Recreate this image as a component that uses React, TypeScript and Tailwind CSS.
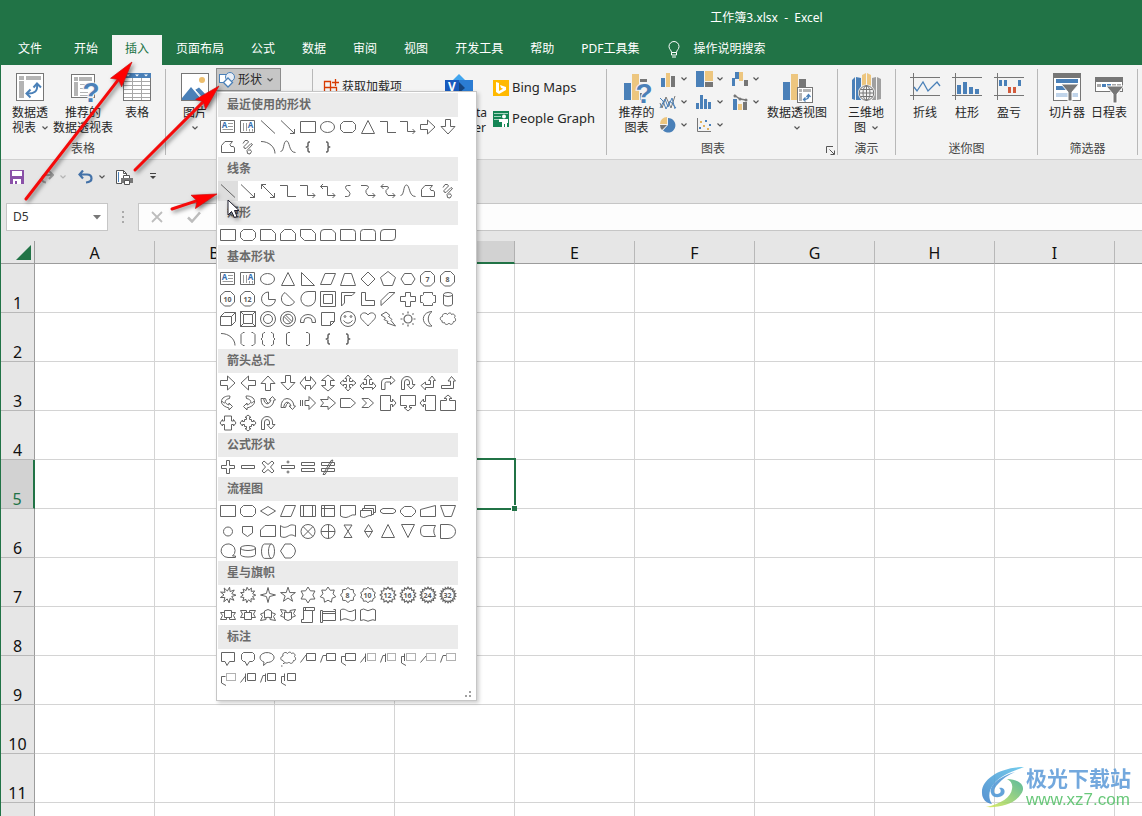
import React from "react";

/* ---------- shape gallery data ---------- */

type Opt = { t?: string; tf?: string; w?: number };
type Shape = [string, string, Opt?];

const circ = (cx: number, cy: number, r: number) =>
  `M${cx - r} ${cy}A${r} ${r} 0 1 1 ${cx + r} ${cy}A${r} ${r} 0 1 1 ${cx - r} ${cy}Z`;

const star = (n: number, R: number, r: number, turn = 0) => {
  const pts: string[] = [];
  for (let i = 0; i < n * 2; i++) {
    const a = (Math.PI * i) / n - Math.PI / 2 + turn;
    const q = i % 2 ? r : R;
    pts.push(`${(10 + q * Math.cos(a)).toFixed(2)} ${(10 + q * Math.sin(a)).toFixed(2)}`);
  }
  return `M${pts.join("L")}Z`;
};

const rot = (deg: number) => `rotate(${deg} 10 10)`;
const flipX = "translate(20 0) scale(-1 1)";
const flipY = "translate(0 20) scale(1 -1)";

const RECT = "M2.5 4.5H17.5V15.5H2.5Z";
const ROUND = "M5.5 4.5H14.5L17.5 7.5V12.5L14.5 15.5H5.5L2.5 12.5V7.5Z";
const ELLIPSE = "M2.5 10A7 5.500 0 1 1 16.5 10A7 5.500 0 1 1 2.5 10Z";
const ARROW = "M2.5 7.5H9.5V3L17 10L9.5 17V12.5H2.5Z";
const TRI = "M10 3.5L16.5 16.5H3.5Z";
const OCT = "M7 2.500H12.500L16.500 6.500V13L12.500 17H6.500L2.500 13V6.500Z";
const ELBOW = "M2 4.5H9.5V15.5H18";
const ELBOW_ARROW = "M2 4.5H9.5V14.5H17M14.5 12L17 14.5L14.5 17";
const FREE = "M3.5 15.5V8.5L7 4.5H14.5L12 7.5L13 9.5H15.5L16.5 11V15.5Z";
const SCRIB = "M5 6.500L7 3.500H9.500L10.500 5L6 9.500V11L8 11.500L13 6.500L14.500 7.500L9 13.500L9.500 16.500L12 17L13.500 14.500L12 12.500L10.500 14";
const SCURVE = "M2.5 14.5C6.5 14.5 5 4 8.5 4C12 4 10.5 15.5 17.5 15.5";
const ARC = "M3 4.5C11 4.5 17 10 17 16.5";
const BRACE = "M12 5H11L10 6V9L8.5 10L10 11V14L11 15H12";
const HEX = "M6.5 4.5H13.5L17 10L13.5 15.5H6.5L3 10Z";
const LINE: Shape = ["直线", "M3 3.5L17 16.5"];
const LARROW: Shape = ["箭头", "M3 3.5L16.5 16.5M16.5 12V16.5H12"];
const UTURN = "M3.5 16.5V9A5.5 5.5 0 0 1 14.5 9V11.5H17L13 16L9 11.5H11.5V9A2.5 2.5 0 0 0 6.5 9V16.5Z";
const CURVED = "M5 5C8 2.5 12 3 12 3L11.5 5.5C6 6.5 6 10.5 11 12V10L14.5 13.5L11 17V15C3 13 2 8 5 5ZM4 8C4.500 9 6 10 7 10";
const CALLOUT_ARROW = "M2.5 2.5H12.500V8.500H14.500V6L18 10L14.500 14V11.500H12.500V17.5H2.5Z";

const groups: { title: string; shapes: Shape[] }[] = [
  {
    title: "最近使用的形状",
    shapes: [
      ["文本框", "TB"], ["竖排文本框", "TBV"], LINE, LARROW, ["矩形", RECT],
      ["椭圆", ELLIPSE], ["圆角矩形", ROUND],
      ["等腰三角形", TRI], ["肘形连接符", ELBOW], ["肘形箭头连接符", ELBOW_ARROW],
      ["箭头: 右", ARROW], ["箭头: 下", ARROW, { tf: rot(90) }], ["任意多边形", FREE],
      ["自由曲线", SCRIB], ["弧形", ARC], ["曲线", SCURVE],
      ["左大括号", BRACE, { w: 1.5 }], ["右大括号", BRACE, { w: 1.5, tf: flipX }],
    ],
  },
  {
    title: "线条",
    shapes: [
      LINE, LARROW, ["双箭头", "M3.5 3.5L16.5 16.5M16.5 12V16.5H12M8 3.5H3.5V8"],
      ["肘形", ELBOW], ["肘形箭头", ELBOW_ARROW],
      ["肘形双箭头", "M2.500 5.5H9.5V14.5H17M5 3L2.500 5.500L5 8M14.5 12L17 14.5L14.5 17"],
      ["曲线连接符", "M12.5 4.500H9.500Q7.500 4.500 7.500 6.500L8.500 8.500L11 10.500L12 12.500Q12 15.5 9.500 15.5H7"],
      ["曲线箭头", "M3 4.500H8Q10.500 4.500 10.500 6.500L8 9.500V11.500L10 14.500H17M14.5 12L17 14.5L14.5 17"],
      ["曲线双箭头", "M3 5.500H9Q10.500 5.500 10.500 7L8 9.500V11.500L10 14.500H17M14.5 12L17 14.5L14.5 17M5.500 3L3 5.500L5.500 8"],
      ["曲线", SCURVE], ["任意多边形", FREE], ["自由曲线", SCRIB],
    ],
  },
  {
    title: "矩形",
    shapes: [
      ["矩形", RECT], ["圆角", ROUND], ["剪去单角", "M2.5 4.5H13.5L17.5 8.5V15.5H2.5Z"],
      ["剪去顶角", "M6.5 4.5H13.5L17.5 8.5V15.5H2.5V8.5Z"],
      ["剪去对角", "M2.5 4.5H13.5L17.5 8.5V15.5H6.5L2.5 11.5Z"],
      ["一个圆顶角剪去另一个", "M6 4.5H14L17.5 8V15.5H2.5V8Q2.5 4.5 6 4.5Z"],
      ["单圆角", "M2.5 4.5H14.5Q17.5 4.5 17.5 7.500V15.5H2.5Z"],
      ["圆顶角", "M5.500 4.5H14.5Q17.5 4.5 17.5 7.500V15.5H2.5V7.500Q2.5 4.5 5.500 4.500Z"],
      ["对角圆角", "M6 4.5H17.5V12Q17.5 15.5 14 15.5H2.5V8Q2.5 4.5 6 4.5Z"],
    ],
  },
  {
    title: "基本形状",
    shapes: [
      ["文本框", "TB"], ["竖排文本框", "TBV"], ["椭圆", ELLIPSE],
      ["三角形", TRI], ["直角三角形", "M3.5 3.5V16.5H16.5Z"], ["平行四边形", "M7 4.5H17.5L13 15.5H2.5Z"],
      ["梯形", "M6.5 4.500H13.5L17.500 16.5H2.500Z"], ["菱形", "M10 3L17 10L10 17L3 10Z"],
      ["五边形", "M10 2.500L17.5 8.5L14.5 16.5H5.5L2.5 8.5Z"], ["六边形", HEX],
      ["七边形", OCT, { t: "7" }], ["八边形", OCT, { t: "8" }],
      ["十边形", OCT, { t: "10" }], ["十二边形", OCT, { t: "12" }],
      ["不完整圆", "M10.500 3A7 7 0 1 0 17.500 10.500H10.500Z"],
      ["弦形", "M7 3.500A7 7 0 1 0 16.5 13Z"], ["泪滴形", "M10 2.500H17.5V10A7.300 7.300 0 1 1 10 2.500Z"],
      ["图文框", "M2.5 2.5H17.5V17.5H2.5ZM5.5 5.5H14.5V14.5H5.5Z"],
      ["半闭框", "M3.5 3.5H17L14 6.5H6.5V14L3.5 17Z"], ["L 形", "M3.5 3.5H7.5V11.5H16.5V16.5H3.5Z"],
      ["斜纹", "M3 11.500L11 3.5H17L3 16.500Z"],
      ["十字形", "M7.500 3.5H12.500V7.5H17.5V12.5H12.500V17.5H7.500V12.5H2.5V7.5H7.500Z"],
      ["缺角矩形", "M5.5 3.5H14.5V5.500L15.500 6.500H17.5V13.5H15.500L14.500 14.500V16.5H5.5V14.500L4.500 13.500H2.5V6.5H4.500L5.5 5.500Z"],
      ["圆柱形", "M5.5 5.5A4.5 2 0 0 1 14.5 5.5V15A4.5 2 0 0 1 5.5 15ZM5.5 5.5A4.5 2 0 0 0 14.5 5.5"],
      ["立方体", "M2.5 7.5L6.5 3.5H17.5V12.5L13.5 16.5H2.5ZM2.5 7.5H13.5V16.5M13.5 7.5L17.5 3.5"],
      ["棱台", "M2.5 2.5H17.5V17.5H2.5ZM5.5 5.5H14.5V14.5H5.5ZM2.5 2.5L5.5 5.5M17.5 2.5L14.5 5.5M2.5 17.5L5.5 14.5M17.5 17.5L14.5 14.5"],
      ["圆环", circ(10, 10, 7.5) + circ(10, 10, 4.5)],
      ["禁止符", circ(10, 10, 7.5) + circ(10, 10, 4.8) + "M6 7.500L12.500 14M7.500 6L14 12.500"],
      ["空心弧", "M2.5 13.5V12A7.500 6.500 0 0 1 17.5 12V13.5H14V12A4 3.500 0 0 0 6 12V13.500Z"],
      ["折角形", "M3.5 3.5H16.5V12.5L12.5 16.5H3.5ZM12.5 16.5V12.5H16.5"],
      ["笑脸", circ(10, 10, 7.5) + circ(7, 7.5, 0.9) + circ(13, 7.5, 0.9) + "M5.500 11.5Q10 17 14.500 11.5"],
      ["心形", "M10 6C8 2.500 2.500 3.500 2.500 7.500C2.500 10.500 7 13 10 17C13 13 17.500 10.500 17.500 7.500C17.500 3.500 12 2.500 10 6Z"],
      ["闪电形", "M8 3L3 6L7.500 9L6 10.500L10 12.500L9 14L17.500 17L13 11.500L14 10.500L10.500 7.500L12 6.500Z"],
      ["太阳形", circ(10, 10, 4) + "M10 2.500V4.500M10 15.500V17.500M2.500 10H4.500M15.500 10H17.500M4.500 4.500L5.500 5.500M14.500 14.500L15.500 15.500M4.500 15.500L5.500 14.500M14.500 5.500L15.500 4.500", { w: 1.2 }],
      ["新月形", "M14 2.500C5 3 3 11 8 15.500C9.500 17 12 17.500 14 17C9 13.500 9 6.500 14 2.500Z"],
      ["云形", "M4.500 12C1.500 11.500 1.500 7.500 4.500 7.500C4 4.500 8 3.500 9.500 5.500C11 3 13.500 4 13.500 5.500C16 4 18 7 16.500 8.500C18.500 10 17.500 13.500 15.500 12.500C15 16 12 16 11 14C9.500 16.500 6.500 15.500 6.500 13.500C4 14.500 3.500 12.500 4.500 12Z"],
      ["弧形", ARC],
      ["双括号", "M6.5 3.5H5L3 5.500V14.500L5 16.5H6.5M13.5 3.5H15L17 5.500V14.500L15 16.5H13.5"],
      ["双大括号", "M7 3.5H6L4.500 5V8.500L3 10L4.500 11.500V15L6 16.5H7M13 3.5H14L15.500 5V8.500L17 10L15.500 11.500V15L14 16.5H13"],
      ["左中括号", "M12 3.5H10L8.5 5V15L10 16.5H12"], ["右中括号", "M8 3.5H10L11.5 5V15L10 16.5H8"],
      ["左大括号", BRACE, { w: 1.5 }], ["右大括号", BRACE, { w: 1.5, tf: flipX }],
    ],
  },
  {
    title: "箭头总汇",
    shapes: [
      ["右", ARROW], ["左", ARROW, { tf: rot(180) }], ["上", ARROW, { tf: rot(-90) }], ["下", ARROW, { tf: rot(90) }],
      ["左右", "M2 10L7.500 3.500V7.5H12.500V3.500L18 10L12.500 16.500V12.5H7.500V16.500Z"],
      ["上下", "M2 10L7.500 3.500V7.5H12.500V3.500L18 10L12.500 16.500V12.5H7.500V16.500Z", { tf: rot(90) }],
      ["十字箭头", "M10 2L13 5.500H11.500V8.500H14.500V7L18 10L14.500 13V11.500H11.500V14.500H13L10 18L7 14.500H8.500V11.500H5.500V13L2 10L5.500 7V8.500H8.500V5.500H7Z"],
      ["丁字箭头", "M10 2L14 6.500H11.500V11.500H14.500V9L18 13L14.500 16.500V14.500H5.500V16.500L2 13L5.500 9V11.500H8.500V6.500H6Z"],
      ["圆角右箭头", "M3.5 16.5V10Q3.5 5.500 8 5.500H12.500V3L17 7.500L12.500 11.500V9H8.500Q7 9 7 10.500V16.5Z"],
      ["手杖形", UTURN],
      ["直角双向", "M14 3L17.500 7.500H15.5V14.5H7.5V17L3 12.500L7.500 9V11.500H12.5V7.500H10.500Z"],
      ["直角上", "M13.500 3.500L17.500 8H15.5V15.5H3.5V12.500H12.500V8H10Z"],
      ["左弧形", CURVED], ["右弧形", CURVED, { tf: flipX }],
      ["下弧形", "M3 5.500H5.500Q6 10 9 11Q12.500 10 13 7H11L14.500 3.500L17.500 7H16Q15 14 9 14.500Q3 14 3 5.500ZM5.500 5.500H7.500Q8 9 10.500 10.500"],
      ["上弧形", "M3 5.500H5.500Q6 10 9 11Q12.500 10 13 7H11L14.500 3.500L17.500 7H16Q15 14 9 14.500Q3 14 3 5.500ZM5.500 5.500H7.500Q8 9 10.500 10.500", { tf: flipY }],
      ["虚尾", "M2.5 7V13M4.500 7V13M7 7.5H11V3.500L17.500 10L11 16.500V12.5H7Z"],
      ["燕尾形箭头", "M2.5 6.500H10V3.500L17.5 10L10 16.500V13.500H2.5L5.5 10Z"],
      ["五边形箭头", "M2.5 5.5H12.5L17.5 10L12.5 14.500H2.5Z"],
      ["V 形", "M4 5.5H10.5L15.5 10L10.500 14.500H4L8.500 10Z"],
      ["右标注", CALLOUT_ARROW],
      ["下标注", CALLOUT_ARROW, { tf: rot(90) }],
      ["左标注", CALLOUT_ARROW, { tf: rot(180) }],
      ["上标注", CALLOUT_ARROW, { tf: rot(-90) }],
      ["左右标注", "M6.500 3H13.500V8H15.500V6.500L18 10L15.500 13V11.500H13.500V17H6.500V11.500H4.500V13L2 10L4.500 6.500V8H6.500Z"],
      ["十字标注", "M10 2L13 4.500H11.500V6.500H13.500V8.500H15.500V7L18 10L15.500 13V11.500H13.500V13.500H11.500V15.500H13L10 18L7 15.500H8.500V13.500H6.500V11.500H4.500V13L2 10L4.500 7V8.500H6.500V6.500H8.500V4.500H7Z"],
      ["环形箭头", UTURN],
    ],
  },
  {
    title: "公式形状",
    shapes: [
      ["加号", "M8.5 3.5H11.5V8.5H16.5V11.5H11.5V16.5H8.5V11.5H3.5V8.5H8.5Z"],
      ["减号", "M3.5 8.5H16.5V11.5H3.5Z"],
      ["乘号", "M4 6L6 4L10 7.500L14 4L16 6L12.500 10L16 14L14 16L10 12.500L6 16L4 14L7.500 10Z"],
      ["除号", "M3.5 8.5H16.5V11.5H3.5Z" + circ(10, 5, 1) + circ(10, 15, 1)],
      ["等号", "M3.5 5.5H16.5V8.5H3.5ZM3.5 11.5H16.5V14.5H3.5Z"],
      ["不等号", "M3.5 5.5H16.5V8.5H3.5ZM3.5 11.5H16.5V14.5H3.5ZM5 17.500L13 3.500L15 3L7 17.500Z"],
    ],
  },
  {
    title: "流程图",
    shapes: [
      ["过程", RECT], ["可选过程", ROUND], ["决策", "M10 5.5L17.5 10L10 14.5L2.5 10Z"], ["数据", "M7 4.5H17.5L13 15.5H2.5Z"],
      ["预定义过程", RECT + "M5.500 4.500V15.500M14.500 4.500V15.500"],
      ["内部贮存", "M3.500 4.5H16.5V15.5H3.5ZM6.5 4.5V15.5M3.500 7.5H16.5"],
      ["文档", "M2.5 4.5H17.5V14C13 13 12 16 8 16.500Q5 16.500 2.500 15Z"],
      ["多文档", "M2.5 9.5H13.5V14.500C10 14 8 16.500 5.500 16.500L2.500 15.500ZM4.500 9.500V7.5H15.5V13.500H13.500M6.500 7.500V4.500H17.5V11.500H15.500"],
      ["终止", "M5 7.5H15L17.500 9V11L15 12.5H5L2.500 11V9Z"],
      ["准备", "M6.500 5.500H13.500L17.500 9V11.500L13.500 15.500H6.500L2.500 11.500V9Z"],
      ["手动输入", "M2.5 8.5L17.5 4.5V15.5H2.5Z"], ["手动操作", "M2.5 4.5H17.5L13.5 15.5H6.5Z"],
      ["接点", circ(10, 10.5, 4.5)], ["离页连接符", "M4.5 5.5H14.5V12L9.500 15.500L4.5 12Z"],
      ["卡片", "M2.5 9L7 4.5H17.5V15.5H2.5Z"],
      ["资料带", "M2.5 4.500C6 7.500 8 6 10 5.500C13 3 15 4 17.5 4.5V15.5C14 13 12 14 10 15C7 17 5 16.500 2.5 15.500Z"],
      ["汇总连接", circ(10, 10.5, 7) + "M5 5.500L15 15.500M15 5.500L5 15.500"], ["或者", circ(10, 10.5, 7) + "M3 10.500H17M10.500 3.500V17.500"],
      ["对照", "M6 4H14L6 16.500H14Z"], ["排序", "M10.500 3.500L14.500 10L10.500 16.500L6.500 10ZM6.500 10.500H14.500"],
      ["摘录", TRI], ["合并", TRI, { tf: flipY }],
      ["库存数据", "M6 4.5H17.5Q14 10 17.5 15.500H6Q2.500 15 2.500 10Q2.500 5 6 4.500Z"],
      ["延期", "M2.5 3.500H10A7 6.500 0 0 1 10 17.500H2.500Z"],
      ["顺序访问", "M10 16.500A7 6.800 0 1 1 14.500 15H17.5V16.500Z"],
      ["磁盘", "M2.500 7A7.500 2.500 0 0 1 17.500 7V13.500A7.500 2.500 0 0 1 2.500 13.500ZM2.500 7A7.500 2.500 0 0 0 17.500 7"],
      ["直接访问", "M6.500 3A3 7.200 0 0 0 6.500 17.400H13.500A3 7.200 0 0 0 13.500 3ZM13.500 3A3 7.200 0 0 0 13.500 17.400"],
      ["显示", "M7 3H13Q17.500 6 17.500 10Q17.500 14 13 17H7L2.500 10Z"],
    ],
  },
  {
    title: "星与旗帜",
    shapes: [
      ["爆炸形 1", star(9, 8, 4, 0.2)], ["爆炸形 2", star(11, 7.8, 4.8, 0.45)],
      ["四角星", star(4, 7.5, 2.2)], ["五角星", star(5, 7.8, 3)], ["六角星", star(6, 8, 4.8)], ["七角星", star(7, 8, 5.2)],
      ["八角星", star(8, 7.5, 6), { t: "8" }], ["十角星", star(10, 7.7, 6.3), { t: "10" }],
      ["十二角星", star(12, 7.9, 6), { t: "12", w: 1.1 }], ["十六角星", star(14, 7.9, 6), { t: "16", w: 1.1 }],
      ["二十四角星", star(16, 7.9, 6), { t: "24", w: 1.1 }], ["三十二角星", star(18, 7.9, 6), { t: "32", w: 1.1 }],
      ["上凸带形", "M6.500 5.500H13.500V12.500H6.500ZM6.500 7.500H2.500L4.500 10.500L2.500 14.500H8.500V12.500M13.500 7.500H17.500L15.500 10.500L17.500 14.500H11.500V12.500"],
      ["前凸带形", "M6.500 7.500H13.500V14.500H6.500ZM6.500 12.500H2.500L4.500 9L2.500 5.500H8.500V7.500M13.500 12.500H17.500L15.500 9L17.500 5.500H11.500V7.500"],
      ["上凸弯带形", "M6.500 6Q10 3 13.500 6V13Q10 11.500 6.500 13ZM6.500 7.500L2.500 9L4.500 11.500L2.500 15.500L8 14.500V12.500M13.500 7.500L17.500 9L15.500 11.500L17.500 15.500L12 14.500V12.500"],
      ["前凸弯带形", "M6.500 6Q10 3 13.500 6V13Q10 11.500 6.500 13ZM6.500 7.500L2.500 9L4.500 11.500L2.500 15.500L8 14.500V12.500M13.500 7.500L17.500 9L15.500 11.500L17.500 15.500L12 14.500V12.500", { tf: flipY }],
      ["竖卷形", "M5.500 2.500H16.500V5.500H14.500V17.500H3.500V14.500H5.500ZM5.500 5.500H14.500M7.500 2.500V5.500"],
      ["横卷形", "M2.500 5.500H4.500V6.500H17.500V15.500H4.500V17.500H2.500ZM4.500 6.500V15.500M4.500 8.500H17.500M15.500 4.500H17.500V6.500"],
      ["波形", "M2.5 5C6 2.500 9 6 11 6.500C14 7 16 5 17.5 4.500V14.500C14 17 12 15 10 14.500C7 13 5 14 2.5 15.500Z"],
      ["双波形", "M2.5 5Q6 3 8 5Q10 6.500 12 5Q15 3 17.500 5V15.500Q15 14 12 15.500Q10 17 8 15.500Q6 14 2.500 15.500Z"],
    ],
  },
  {
    title: "标注",
    shapes: [
      ["对话气泡: 矩形", "M3.5 3.5H16.5V12.5H11.500L9 16.500L7 12.500H3.500Z"],
      ["对话气泡: 圆角", "M5.500 3.500H14.5L16.5 5.500V10.500L14.500 12.500H11.500L9 16.500L7 12.500H5.500L3.500 10.500V5.500Z"],
      ["对话气泡: 椭圆", "M6 13A7 5 0 1 1 9 13.500L5.500 16.500Z"],
      ["思想气泡: 云", "M5 11.500C2 11.500 2 7.500 5 7C4 3.500 8 2.500 9.500 4.500C11 2.500 13 3 13.500 4.500C16 3 18 6 16.500 7.500C18.500 9 17.500 12.500 15.500 11.500C15 15 12 15 11 13C9.500 15 6 14 5 11.500ZM5 14.500H6.500M3 17H4.500"],
      ["线形", "M8.5 4.5H17.5V11.5H8.5ZM2.500 13.500L8 6"],
      ["弯曲线形", "M8.5 4.5H17.5V11.5H8.5ZM2.500 13.500L5 6.500H8.500"],
      ["双弯曲线形", "M7.5 4.5H17.5V11.5H7.5ZM7.500 7.500H3.500V13.500L8 16.500"],
      ["线形 (强调)", "M7.500 4.500V13M2.500 13.500L7.500 7M DASH9.500 4.500H17.500V11.500H9.500Z"],
      ["弯曲 (强调)", "M7.500 4.500V13M2.500 13.500L5 6.500H7.500M DASH9.500 4.500H17.500V11.500H9.500Z"],
      ["双弯曲 (强调)", "M6.500 4.500V12M6.500 7.500H3.500V14L8 16.500M DASH8.500 4.500H17.500V11.500H8.500Z"],
      ["线形 (无边框)", "M2.500 13.500L8 7M DASH8.500 4.500H17.500V11.500H8.500Z"],
      ["弯曲 (无边框)", "M2.500 13.500L5 6.500H8M DASH8.500 4.500H17.500V11.500H8.500Z"],
      ["双弯曲 (无边框)", "M7.500 7.500H3.500V14L8 16.500M DASH8.500 4.500H17.500V11.500H8.500Z"],
      ["线形 (带边框)", "M7.500 4.500V13M2.500 13.500L7.500 7M9.500 4.500H17.500V11.500H9.500Z"],
      ["弯曲 (带边框)", "M7.500 4.500V13M2.500 13.500L5 6.500H7.500M9.500 4.500H17.500V11.500H9.500Z"],
      ["双弯曲 (带边框)", "M6.500 4.500V12M6.500 7.500H3.500V14L8 16.500M9.500 4.500H17.500V11.500H9.500Z"],
    ],
  },
];

function ShapeIcon({ d, opt = {} }: { d: string; opt?: Opt }) {
  if (d === "TB" || d === "TBV") {
    const vertical = d === "TBV";
    return (
      <svg viewBox="0 0 20 20" className="block size-5" aria-hidden="true">
        <path d="M2.5 3.5H16.5V15.5H2.5Z" fill="none" stroke="#6a6a6a" />
        <path
          d={vertical ? "M5.5 6V14M8.5 6V14M11.500 12V14.500M14.500 12V14.500" : "M10 6.5H15M10 9.5H15M4.500 12.5H15"}
          stroke="#9a9a9a"
          fill="none"
        />
        <text x={vertical ? 12.5 : 6.5} y={11} fontSize="8" fontWeight="700" textAnchor="middle" fill="#3a6fb0">
          A
        </text>
      </svg>
    );
  }
  const [solid, dashed] = d.split("M DASH");
  return (
    <svg viewBox="0 0 20 20" className="block size-5" aria-hidden="true">
      <g fill="none" stroke="#636363" strokeWidth={opt.w ?? 1} transform={opt.tf}>
        <path d={solid} />
        {dashed && <path d={"M" + dashed} strokeDasharray="1 1" />}
      </g>
      {opt.t && (
        <text x="9.500" y="12.5" fontSize="7" fontWeight="700" textAnchor="middle" fill="#5a5a5a">
          {opt.t}
        </text>
      )}
    </svg>
  );
}

function ShapeMenu() {
  return (
    <div
      role="menu"
      aria-label="形状"
      className="absolute top-full left-0 z-20 w-[261px] border border-[#c6c6c6] bg-white px-px pt-px pb-[11px] shadow-[2px_2px_4px_rgba(0,0,0,0.2)]"
    >
      {groups.map((g, gi) => (
        <section key={g.title} className="w-60">
          <h3 className="h-6 bg-[#ebebeb] pl-[9px] text-xs leading-6 font-bold text-[#6a6a6a]">{g.title}</h3>
          <div className="grid grid-cols-12">
            {g.shapes.map(([name, d, opt], i) => (
              <button
                key={i}
                type="button"
                role="menuitem"
                aria-label={name}
                className={gi === 1 && i === 0 ? "size-5 bg-[#dedede]" : "size-5 hover:bg-[#dedede]"}
              >
                <ShapeIcon d={d} opt={opt} />
              </button>
            ))}
          </div>
        </section>
      ))}
      <svg className="absolute right-1 bottom-0.5 size-2" viewBox="0 0 8 8" aria-hidden="true">
        <path d="M5 1h2v2H5zM5 5h2v2H5zM1 5h2v2H1z" fill="#a0a0a0" />
      </svg>
    </div>
  );
}

/* ---------- ribbon ---------- */

const BLUE = "#4a80b8";
const SAND = "#edc67f";
const GRAY = "#767676";

function Chevron({ color = "#555" }: { color?: string }) {
  return (
    <svg width="6" height="4" viewBox="0 0 6 4" className="shrink-0" aria-hidden="true">
      <path d="M0.500 0.500L3 3L5.500 0.500" fill="none" stroke={color} strokeWidth="1.200" />
    </svg>
  );
}

const Ico = ({ children, s = 28 }: { children: React.ReactNode; s?: number }) => (
  <svg width={s} height={s} viewBox={`0 0 ${s} ${s}`} className="shrink-0 overflow-visible" aria-hidden="true">
    {children}
  </svg>
);

const Question = ({ x, y }: { x: number; y: number }) => (
  <text
    x={x}
    y={y}
    fontSize="28"
    fontWeight="700"
    fontFamily="Liberation Sans, sans-serif"
    textAnchor="middle"
    fill={BLUE}
    stroke="#f3f3f3"
    strokeWidth="2"
    paintOrder="stroke"
  >
    ?
  </text>
);

const PivotIcon = () => (
  <Ico>
    <rect x=".5" y=".5" width="27" height="27" fill="#fff" stroke={GRAY} />
    <path d="M3 3h5v4H3zM10 3h15v4H10zM3 8h5v17H3z" fill="#b4b4b4" />
    <path d="M11 20.500C18 21 22 18 21 12" fill="none" stroke={BLUE} strokeWidth="2" />
    <path d="M17.500 14.500L21 10.500L25 14.500M14.500 16.500L10.500 20.500L14.500 24.500" fill="none" stroke={BLUE} strokeWidth="2" />
  </Ico>
);

const RecPivotIcon = () => (
  <Ico>
    <rect x="2.500" y="1.500" width="23" height="23" fill="#fff" stroke={GRAY} />
    <path d="M5 4h4v4H5zM10 4h13v4H10zM5 9h4v14H5z" fill="#b4b4b4" />
    <path d="M11 11.500h11M11 15.500h8M11 19.500h8M11 22.500h8" stroke="#b4b4b4" />
    <Question x={22} y={29} />
  </Ico>
);

const TableIcon = () => (
  <Ico>
    <rect x=".5" y=".5" width="27" height="27" fill="#fff" stroke={GRAY} />
    <rect width="28" height="5" fill={BLUE} />
    <path d="M3 1.500h4l-2 2zM12 1.500h4l-2 2zM21 1.500h4l-2 2z" fill="#fff" />
    <path d="M1 8.500H27M1 12.500H27M1 16.500H27M1 20.500H27M1 24.500H27M9.500 5V27M18.500 5V27" stroke="#a8a8a8" fill="none" />
  </Ico>
);

const PictureIcon = () => (
  <Ico>
    <rect x=".5" y=".5" width="27" height="27" fill="#fff" stroke={GRAY} />
    <circle cx="21" cy="7" r="3" fill="#edbe6c" />
    <path d="M1 25L10 14L21 27H1zM14 17L18 14.500L27 24V27H22z" fill={BLUE} />
    <path d="M14 17L23 27" stroke="#fff" />
  </Ico>
);

const RecChartIcon = () => (
  <Ico>
    <path d="M1 10h7v17H1z" fill={BLUE} />
    <path d="M9 1h7v26H9z" fill={SAND} />
    <path d="M17 6h7v3h-7zM17 20h2v7h-2z" fill={GRAY} />
    <Question x={21} y={30} />
  </Ico>
);

const PivotChartIcon = () => (
  <Ico>
    <path d="M0 9h7v18H0z" fill={BLUE} />
    <path d="M8 1h7v26H8z" fill={SAND} />
    <path d="M16 6h7v8h-7z" fill={GRAY} />
    <rect x="14.500" y="14.500" width="15" height="15" fill="#fff" stroke={GRAY} />
    <path d="M16 16h3v3h-3zM20 16h8v3h-8zM16 20h3v8h-3z" fill="#b4b4b4" />
    <path d="M21 26.500q5 0 4.500-4M23.500 24l2-2.500 2 2.500M22.500 24.500l-2 2 2 2" fill="none" stroke={BLUE} strokeWidth="1.300" />
  </Ico>
);

const MapIcon = () => (
  <Ico>
    <path d="M0 7l3-3v23l-3-1zM4 4l5 1v22H4z" fill={BLUE} />
    <path d="M10 2l4-2v14h-4zM15 0l4 2v12h-4z" fill={SAND} />
    <path d="M20 5l4-1v23h-4zM25 4l4 2v20l-4 1z" fill="#a0a0a0" />
    <circle cx="14.500" cy="20" r="8.500" fill="#f3f3f3" />
    <g fill="none" stroke={GRAY}>
      <circle cx="14.500" cy="20" r="7.300" />
      <ellipse cx="14.500" cy="20" rx="3.500" ry="7.300" />
      <path d="M7 20h15M8.500 16.500h12M8.500 23.500h12M14.500 12.500v15" />
    </g>
  </Ico>
);

const Axes = () => <path d="M-1 4.500H29M-1 22.500H29M2.500 0V27" stroke={GRAY} fill="none" />;
const SparkLine = () => (
  <Ico><Axes /><path d="M3 14l3 4 6-9 5 9 9-9 3 4" fill="none" stroke={BLUE} strokeWidth="1.300" /></Ico>
);
const SparkCol = () => (
  <Ico><Axes /><path d="M4 12h4v9H4zM10 9h4v12h-4zM16 14h4v7h-4zM22 16h4v5h-4z" fill={BLUE} /></Ico>
);
const SparkWin = () => (
  <Ico><Axes /><path d="M4 7h3v6H4zM9 7h3v6H9zM23 7h3v6h-3z" fill={BLUE} /><path d="M13 14h3v6h-3zM18 14h3v6h-3z" fill="#d35b3c" /></Ico>
);

const Funnel = ({ x, y }: { x: number; y: number }) => (
  <path d={`M${x} ${y}h18l-7 8v9h-4v-9z`} fill={GRAY} stroke="#fff" />
);
const SlicerIcon = () => (
  <Ico>
    <rect x=".5" y=".5" width="27" height="27" fill="#fff" stroke={GRAY} />
    <rect width="28" height="5" fill={GRAY} />
    <path d="M3 6h22v4H3zM3 13h12v4H3z" fill={BLUE} />
    <path d="M3 20h22v4H3z" fill="#c0d4ea" />
    <Funnel x={8} y={11} />
  </Ico>
);
const TimelineIcon = () => (
  <Ico>
    <rect x=".5" y="4.500" width="27" height="14" fill="#fff" stroke={GRAY} />
    <rect y="4" width="28" height="5" fill={GRAY} />
    <path d="M2 11h4v3H2zM17 11h4v3h-4zM22 11h4v3h-4z" fill="#a8a8a8" />
    <path d="M7 11h4v3H7zM12 11h4v3h-4z" fill={BLUE} />
    <Funnel x={11} y={13} />
  </Ico>
);

function BigButton({ icon, lines, width, chevron }: { icon: React.ReactNode; lines: string[]; width: string; chevron?: "below" | "inline" }) {
  return (
    <button type="button" className={`flex shrink-0 flex-col items-center pt-2 text-xs leading-[15px] whitespace-nowrap text-[#262626] ${width}`}>
      {icon}
      <span className="mt-1 flex flex-col items-center">
        {lines.map((l, i) => (
          <span key={l} className="flex items-center gap-1.5">
            {l}
            {chevron === "inline" && i === lines.length - 1 && <Chevron />}
          </span>
        ))}
        {chevron === "below" && (
          <span className="flex h-[15px] items-center"><Chevron /></span>
        )}
      </span>
    </button>
  );
}

function Group({ title, className, children, launcher }: { title?: string; className: string; children: React.ReactNode; launcher?: boolean }) {
  return (
    <div className="flex shrink-0">
      <div className={`flex flex-col ${className}`}>
        <div className="flex h-[74px]">{children}</div>
        <div className={`relative text-center text-xs leading-5 text-[#444] ${launcher ? "pr-6" : ""}`}>
          {title}
          {launcher && (
            <button type="button" aria-label="图表选项" className="absolute right-0 bottom-1">
              <svg width="9" height="9" viewBox="0 0 9 9" className="block">
                <path d="M.5 7V.5H7M3.500 3.500L8 8M8.500 4.500V8.500H4.500" fill="none" stroke="#555" />
              </svg>
            </button>
          )}
        </div>
      </div>
      <div className="mt-1 h-[86px] w-px bg-[#b8b8b8]" />
    </div>
  );
}

const chartMenus: [string, React.ReactNode][] = [
  ["柱形图", <><path d="M1 7h4v9H1z" fill={BLUE} /><path d="M6 2h4v14H6z" fill={SAND} /><path d="M11 5h4v11h-4z" fill={GRAY} /></>],
  ["层次结构图", <><path d="M0 0h8v16H0z" fill={BLUE} /><path d="M9 0h8v10H9z" fill={SAND} /><path d="M9 11h8v5H9z" fill={GRAY} /></>],
  ["瀑布图", <><path d="M0 7h3v8H0zM3 1h4v7H3z" fill={BLUE} /><path d="M7 1h4v9H7z" fill={SAND} /><path d="M12 9h4v6h-4z" fill={GRAY} /></>],
  ["折线图", <><path d="M0 9l2 5 4-11 5 11 4-12" fill="none" stroke={GRAY} /><path d="M0 14l5-9 3 8 4-9 3 11M0 4l3 3 3 8 4-8 6 7" fill="none" stroke={BLUE} /></>],
  ["统计图", <path d="M0 9h3v6H0zM4 1h3v14H4zM8 5h3v10H8zM12 8h3v7h-3z" fill={BLUE} />],
  ["组合图", <><path d="M1 5h4v11H1z" fill={BLUE} /><path d="M6 10h4v6H6z" fill={SAND} /><path d="M11 8h4v8h-4z" fill={GRAY} /><path d="M2 1l6 4 6 1" fill="none" stroke={GRAY} strokeWidth="1.500" /><circle cx="3" cy="2" r="1.500" fill={GRAY} /><circle cx="8" cy="5" r="1.500" fill={GRAY} /><circle cx="14" cy="6" r="1.500" fill={GRAY} /></>],
  ["饼图", <><path d="M8 1a7.300 7.300 0 1 1-5 12.500L8 8z" fill={BLUE} /><path d="M7 7V0a7 7 0 0 0-7 7z" fill={SAND} /><path d="M0 8h7l-5 5a7 7 0 0 1-2-5z" fill={GRAY} /></>],
  ["散点图", <><path d="M1.500 1V14.500H15" fill="none" stroke={GRAY} /><path d="M9 3h2v2H9zM13 7h2v2h-2zM3 10h2v2H3z" fill={BLUE} /><path d="M4 4h2v2H4zM7 8h2v2H7zM11 11h2v2h-2z" fill="#e2b25c" /></>],
];

function Ribbon() {
  return (
    <div className="flex h-[95px] border-b border-[#d0d0d0] bg-[#f3f3f3]">
      <Group title="表格" className="w-[164px] px-[7px]">
        <BigButton icon={<PivotIcon />} lines={["数据透", "视表"]} width="w-11" chevron="inline" />
        <BigButton icon={<RecPivotIcon />} lines={["推荐的", "数据透视表"]} width="w-[62px]" />
        <BigButton icon={<TableIcon />} lines={["表格"]} width="w-[46px]" />
      </Group>
      <Group className="w-[146px] pl-2">
        <BigButton icon={<PictureIcon />} lines={["图片"]} width="w-[42px]" chevron="below" />
        <div className="relative mt-[3px] h-[23px]">
          <button type="button" aria-expanded="true" className="flex h-[23px] w-[65px] items-center gap-[3px] border border-[#8c8c8c] bg-[#c6c6c6] pl-0.5 text-xs text-[#262626]">
            <Ico s={16}>
              <rect x=".5" y="2.500" width="9" height="8" fill="#fff" stroke={BLUE} />
              <circle cx="11" cy="5" r="4.500" fill="#e8eef6" stroke={BLUE} />
              <path d="M9 6L13.500 10.500L9 15L4.500 10.500Z" fill="#fff" stroke={BLUE} strokeWidth="1.300" />
            </Ico>
            形状
            <span className="ml-0.5"><Chevron /></span>
          </button>
          <ShapeMenu />
        </div>
      </Group>
      <Group className="w-[293px] pl-[10px]">
        <button type="button" className="mt-3 flex h-5 items-center gap-[3px] text-xs leading-5 text-[#262626]">
          <Ico s={16}>
            <path d="M1.500 2.500h6v6h-6zM1.500 8.500h6v6h-6zM7.500 8.500h6v6h-6zM12.500 0v7M9 3.500h7" fill="none" stroke="#d83b01" strokeWidth="1.300" />
          </Ico>
          <span className="whitespace-nowrap">获取加载项</span>
        </button>
        <div className="ml-6 flex w-[66px] justify-center">
          <BigButton
            icon={
              <Ico>
                <path d="M14 1L22 9V20H6V9Z" fill="#41a5ee" />
                <path d="M14 7H28V20H14Z" fill="#2b7cd3" />
                <path d="M14 9L20 15L14 20Z" fill="#16447e" />
                <path d="M0 7H14V21H0Z" fill="#185abd" />
                <text x="7" y="18" fontSize="12" fontWeight="700" textAnchor="middle" fill="#fff">V</text>
              </Ico>
            }
            lines={["Visio Data", "Visualizer"]}
            width="w-[66px]"
          />
        </div>
        <div className="ml-px flex flex-col gap-[7px] pt-[11px] text-[13px] text-[#262626]">
          <button type="button" className="flex h-6 items-center gap-[3px] whitespace-nowrap">
            <Ico s={16}>
              <path d="M0 0h16v16H0z" fill="#ffb900" />
              <path d="M3 2l3 1v8l4-2.300-2-1L7 5l6 2v3l-7 4-3-2z" fill="#fff" />
            </Ico>
            Bing Maps
          </button>
          <button type="button" className="flex h-6 items-center gap-[3px] whitespace-nowrap">
            <Ico s={16}>
              <path d="M0 0h16v16H0z" fill="#148555" />
              <path d="M1 2.500h14M1 5.500h7" stroke="#a4d4be" />
              <path d="M1 8.500h5" stroke="#a4d4be" />
              <circle cx="11" cy="5.500" r="2" fill="#fff" />
              <path d="M6 8h9v4h-1v4h-2v-3h-1v3H9v-5H6z" fill="#fff" />
            </Ico>
            People Graph
          </button>
        </div>
      </Group>
      <Group title="图表" className="w-[230px] pr-[2px] pl-2" launcher>
        <BigButton icon={<RecChartIcon />} lines={["推荐的", "图表"]} width="w-[43px]" />
        <div className="grid grid-cols-[36px_36px_33px] grid-rows-[23px_23px_23px] pt-0.5 pl-0.5">
          {chartMenus.map(([name, art]) => (
            <button key={name} type="button" aria-label={name} className="flex items-center gap-[5px]">
              <Ico s={16}>{art}</Ico>
              <Chevron />
            </button>
          ))}
        </div>
        <BigButton icon={<PivotChartIcon />} lines={["数据透视图"]} width="w-16" chevron="below" />
      </Group>
      <Group title="演示" className="w-[57px] px-1">
        <BigButton icon={<MapIcon />} lines={["三维地", "图"]} width="w-12" chevron="inline" />
      </Group>
      <Group title="迷你图" className="w-[141px] px-2">
        <BigButton icon={<SparkLine />} lines={["折线"]} width="w-[42px]" />
        <BigButton icon={<SparkCol />} lines={["柱形"]} width="w-[42px]" />
        <BigButton icon={<SparkWin />} lines={["盈亏"]} width="w-[42px]" />
      </Group>
      <Group title="筛选器" className="w-[99px] px-2">
        <BigButton icon={<SlicerIcon />} lines={["切片器"]} width="w-[42px]" />
        <BigButton icon={<TimelineIcon />} lines={["日程表"]} width="w-[42px]" />
      </Group>
    </div>
  );
}

/* ---------- bars ---------- */

const tabs = ["开始", "插入", "页面布局", "公式", "数据", "审阅", "视图", "开发工具", "帮助", "PDF工具集"];

function TitleAndTabs() {
  return (
    <header className="bg-[#217346] text-xs text-white">
      <div className="flex h-[35px] justify-center pl-[390px] leading-[35px] whitespace-pre">{"工作簿3.xlsx  -  Excel"}</div>
      <nav className="flex h-[30px] gap-px pl-1 whitespace-nowrap">
        <button type="button" className="mr-[5px] px-[13px] pb-0.5">文件</button>
        {tabs.map((t) => (
          <button
            key={t}
            type="button"
            className={t === "插入" ? "bg-[#f3f3f3] px-[13px] pb-0.5 text-[#217346]" : "px-[13px] pb-0.5"}
          >
            {t}
          </button>
        ))}
        <button type="button" className="ml-[15px] flex items-center gap-[13px] pb-0.5">
          <svg width="12" height="17" viewBox="0 0 12 17" fill="none" stroke="#fff" aria-hidden="true">
            <path d="M3.500 11.500C3.500 9 1 8.500 1 5.500A5 5 0 0 1 11 5.500C11 8.500 8.500 9 8.500 11.500ZM3.500 11.500V14H8.500V11.500M4 16H8" />
          </svg>
          操作说明搜索
        </button>
      </nav>
    </header>
  );
}

function QuickAccess() {
  return (
    <div className="flex h-[43px] items-center pb-[10px] pl-[9px]">
      <button type="button" aria-label="保存">
        <svg width="14" height="14" viewBox="0 0 14 14" className="block">
          <path d="M0 0h14v14H0z" fill="#8a51a8" />
          <path d="M2 1h10v5H2zM3 9h8v5H3z" fill="#fff" />
          <path d="M5 11h2v3H5z" fill="#8a51a8" />
        </svg>
      </button>
      <button type="button" aria-label="恢复" className="ml-4 flex items-center gap-1.5">
        <svg width="14" height="14" viewBox="0 0 14 14" className="block">
          <path d="M9 1L13 5L9 9M13 5H6Q2 5 2 9Q2 12 6 12.500" fill="none" stroke="#a0a0a0" strokeWidth="2" />
        </svg>
        <Chevron color="#b4b4b4" />
      </button>
      <button type="button" aria-label="撤消" className="ml-3 flex items-center gap-1.5">
        <svg width="15" height="14" viewBox="0 0 15 14" className="block">
          <path d="M5 0.500L1.500 4.500L5 8.500M1.500 4.500H9Q13.500 4.500 13.500 8.500Q13.500 12 8 12.500" fill="none" stroke="#4472a8" strokeWidth="2.200" />
        </svg>
        <Chevron />
      </button>
      <button type="button" aria-label="打印预览" className="ml-[11px]">
        <svg width="17" height="16" viewBox="0 0 17 16" className="block">
          <path d="M6 14.500H.5V1.500H7.500L10.500 4.500V6" fill="#fff" stroke="#555" />
          <path d="M7.500 1.500V4.500H10.500" fill="none" stroke="#555" />
          <path d="M2.500 3V13" stroke={BLUE} />
          <path d="M7.500 9V6.500H13.500V9" fill="#fff" stroke="#555" />
          <path d="M5 9h12v5H5z" fill="#777" />
          <path d="M8.500 11.500h5v4h-5z" fill="#fff" stroke="#555" />
        </svg>
      </button>
      <button type="button" aria-label="自定义快速访问工具栏" className="ml-[17px]">
        <svg width="6" height="7" viewBox="0 0 6 7" className="block">
          <path d="M0 .5h6" stroke="#444" />
          <path d="M0 3h6L3 6z" fill="#444" />
        </svg>
      </button>
    </div>
  );
}

function FormulaBar() {
  return (
    <div className="flex h-7">
      <label className="ml-[5px] flex w-[102px] items-center border border-[#c6c6c6] bg-white pr-1.5">
        <input aria-label="名称框" defaultValue="D5" className="w-full min-w-0 bg-transparent pl-1.5 text-xs text-[#333] outline-none" />
        <svg width="8" height="5" viewBox="0 0 8 5" aria-hidden="true" className="shrink-0"><path d="M0 0h8L4 4.500z" fill="#777" /></svg>
      </label>
      <svg width="3" height="12" viewBox="0 0 3 12" className="mt-2 ml-[14px]" aria-hidden="true">
        <path d="M0 0h2v2H0zM0 5h2v2H0zM0 10h2v2H0z" fill="#aaa" />
      </svg>
      <div className="ml-[13px] flex flex-1 items-center border-y border-l border-[#c6c6c6] bg-[#fdfdfd] pl-3">
        <button type="button" aria-label="取消">
          <svg width="12" height="12" viewBox="0 0 12 12" className="block"><path d="M1 1L11 11M11 1L1 11" stroke="#bdbdbd" strokeWidth="1.800" /></svg>
        </button>
        <button type="button" aria-label="输入" className="ml-6">
          <svg width="14" height="12" viewBox="0 0 14 12" className="block"><path d="M1 6.500L5 10.500L13 1.500" fill="none" stroke="#bdbdbd" strokeWidth="2.500" /></svg>
        </button>
        <input aria-label="编辑栏" className="ml-4 h-full min-w-0 flex-1 bg-transparent text-xs outline-none" />
      </div>
    </div>
  );
}

/* ---------- sheet ---------- */

const cols = ["A", "B", "C", "D", "E", "F", "G", "H", "I", ""];
const rows = Array.from({ length: 12 }, (_, i) => i + 1);

function Sheet() {
  return (
    <div className="mt-[10px] min-h-0 flex-1 overflow-hidden bg-white">
      <table className="w-max table-fixed border-separate border-spacing-0 text-base">
        <thead>
          <tr className="h-[23px]">
            <th className="w-[34px] border-r border-b border-[#9c9c9c] bg-[#e6e6e6] p-0">
              <svg width="15" height="15" viewBox="0 0 15 15" className="ml-[15px] block" aria-hidden="true"><path d="M15 0V15H0z" fill="#217346" /></svg>
            </th>
            {cols.map((c, i) => (
              <th
                key={i}
                scope="col"
                className={
                  c === "D"
                    ? "w-[120px] border-r border-b-2 border-r-[#b0b0b0] border-b-[#217346] bg-[#d2d2d2] p-0 leading-5 font-normal text-[#217346]"
                    : "w-[120px] border-r border-b border-r-[#b8b8b8] border-b-[#9c9c9c] bg-[#e6e6e6] p-0 pt-0.5 leading-5 font-normal text-[#111]"
                }
              >
                {c}
              </th>
            ))}
          </tr>
        </thead>
        <tbody>
          {rows.map((r) => (
            <tr key={r} className="h-[49px]">
              <th
                scope="row"
                className={
                  r === 5
                    ? "border-r-2 border-b border-r-[#217346] border-b-[#b8b8b8] bg-[#d2d2d2] p-0 align-bottom leading-[18px] font-normal text-[#217346]"
                    : "border-r border-b border-r-[#9c9c9c] border-b-[#b8b8b8] bg-[#e6e6e6] p-0 align-bottom leading-[18px] font-normal text-[#111]"
                }
              >
                {r < 12 ? r : ""}
              </th>
              {cols.map((c, i) => (
                <td key={i} className="relative border-r border-b border-[#d4d4d4] p-0">
                  {c === "D" && r === 5 && (
                    <div className="absolute -inset-0.5 z-10 border-2 border-[#217346]">
                      <div className="absolute -right-[3px] -bottom-[3px] size-[6px] border-t border-l border-white bg-[#217346]" />
                    </div>
                  )}
                </td>
              ))}
            </tr>
          ))}
        </tbody>
      </table>
    </div>
  );
}

/* ---------- overlays ---------- */

function Arrow({ x1, y1, x2, y2, len = 25 }: { x1: number; y1: number; x2: number; y2: number; len?: number }) {
  const L = Math.hypot(x2 - x1, y2 - y1);
  const ux = (x2 - x1) / L;
  const uy = (y2 - y1) / L;
  const at = (back: number, side: number) => `${x2 - ux * back - uy * side},${y2 - uy * back + ux * side}`;
  return (
    <g>
      <line x1={x1} y1={y1} x2={x2 - ux * (len - 5)} y2={y2 - uy * (len - 5)} stroke="#f50a0a" strokeWidth="3" strokeLinecap="round" />
      <polygon points={`${at(0, 0)} ${at(len, 7)} ${at(len - 4, 0)} ${at(len, -7)}`} fill="#ff0000" stroke="#d01010" strokeWidth="0.700" />
    </g>
  );
}

function Annotations() {
  return (
    <svg className="pointer-events-none absolute top-0 -left-px z-30 size-full drop-shadow-[2px_2px_2px_rgba(0,0,0,0.5)]" aria-hidden="true">
      <Arrow x1={26} y1={199} x2={132} y2={62} len={26} />
      <Arrow x1={135} y1={170} x2={219} y2={86} len={26} />
      <Arrow x1={172} y1={209} x2={217} y2={194} />
      <path d="M228 200V215L231.500 211.500L234.500 217.500L237 216.500L234.500 210.500H239Z" fill="#fff" stroke="#1c1c2c" />
    </svg>
  );
}

function Watermark() {
  return (
    <div className="pointer-events-none absolute right-[11px] bottom-[7px] z-10 flex items-center gap-px opacity-85">
      <svg width="44" height="42" viewBox="0 0 44 42" aria-hidden="true">
        <defs>
          <linearGradient id="blueSwoosh" x1="1" y1="0" x2="0" y2="1">
            <stop offset="0" stopColor="#5cc4ea" />
            <stop offset="1" stopColor="#3b7fc8" />
          </linearGradient>
          <linearGradient id="greenSwoosh" x1="1" y1="0" x2="0" y2="1">
            <stop offset="0" stopColor="#3fae8c" />
            <stop offset="1" stopColor="#d8ea50" />
          </linearGradient>
        </defs>
        <path d="M43 1C20 1 0 13 1 27C1 33 5 37 11 38C5 29 9 17 24 9C31 5 38 3 43 1Z" fill="url(#blueSwoosh)" />
        <path d="M34 6C17 11 8 20 10 27C11 32 19 33 23 28C25 24 22 21 18 22C21 24 20 28 16 28C12 28 12 23 17 18C21 13 27 9 34 6Z" fill="#4a94d4" />
        <path d="M26 13C38 13 46 20 40 28C34 38 19 42 5 41C20 38 30 31 31 23C32 18 30 15 26 13Z" fill="url(#greenSwoosh)" />
      </svg>
      <div className="flex flex-col">
        <span className="text-[21px] leading-[26px] font-bold text-[#5b9ad8]">极光下载站</span>
        <span className="font-['Liberation_Sans',sans-serif] text-[17px] leading-[18px] text-[#4fbf63]">www.xz7.com</span>
      </div>
    </div>
  );
}

export default function App() {
  return (
    <div className="relative flex h-screen flex-col overflow-hidden border-l border-[#217346] bg-[#e6e6e6] font-['Noto_Sans','Noto_Sans_CJK_SC',sans-serif]">
      <TitleAndTabs />
      <Ribbon />
      <QuickAccess />
      <FormulaBar />
      <Sheet />
      <Annotations />
      <Watermark />
    </div>
  );
}
